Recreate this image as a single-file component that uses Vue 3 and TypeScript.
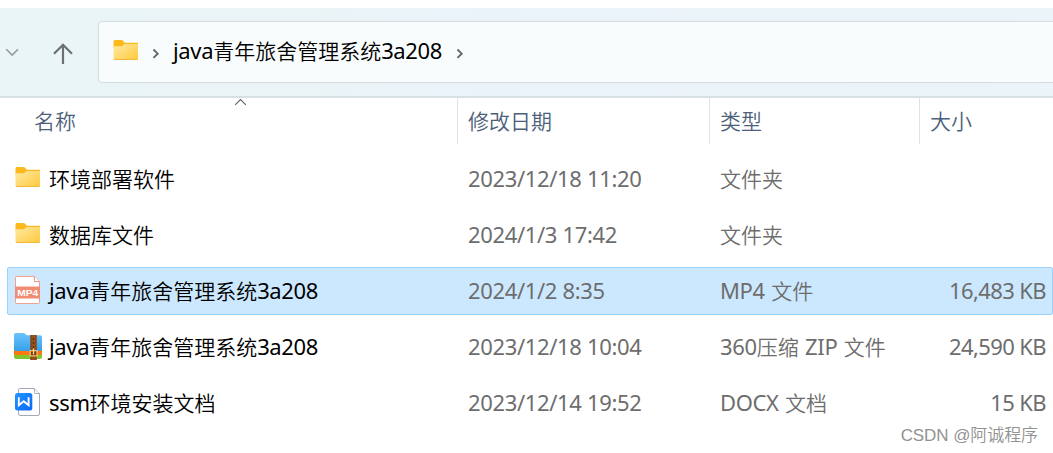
<script setup lang="ts">
import { h, type FunctionalComponent } from 'vue'

type Kind = 'folder' | 'mp4' | 'zip' | 'docx'
interface Entry {
  name: string
  date: string
  type: string
  size: string
  kind: Kind
  selected?: boolean
}

const folderName = 'java青年旅舍管理系统3a208'
const columns = ['名称', '修改日期', '类型', '大小']
const entries: Entry[] = [
  { name: '环境部署软件', date: '2023/12/18 11:20', type: '文件夹', size: '', kind: 'folder' },
  { name: '数据库文件', date: '2024/1/3 17:42', type: '文件夹', size: '', kind: 'folder' },
  { name: folderName, date: '2024/1/2 8:35', type: 'MP4 文件', size: '16,483 KB', kind: 'mp4', selected: true },
  { name: folderName, date: '2023/12/18 10:04', type: '360压缩 ZIP 文件', size: '24,590 KB', kind: 'zip' },
  { name: 'ssm环境安装文档', date: '2023/12/14 19:52', type: 'DOCX 文档', size: '15 KB', kind: 'docx' },
]

// Latin and Chinese runs are sized separately so that they sit evenly together.
const Mixed: FunctionalComponent<{ text: string }> = (props) =>
  h(
    'span',
    { class: 'mixed' },
    (props.text.match(/[\u4e00-\u9fff]+|[^\u4e00-\u9fff]+/g) ?? []).map((run) =>
      h('span', { class: /[\u4e00-\u9fff]/.test(run) ? 'han' : 'latin' }, run),
    ),
  )
Mixed.props = ['text']
</script>

<template>
  <div class="window">
    <svg class="defs" width="0" height="0" aria-hidden="true">
      <defs>
        <linearGradient id="folderFace" x1="0" y1="0" x2="1" y2="1">
          <stop offset="0" stop-color="#ffe9a6" />
          <stop offset="1" stop-color="#ffca3a" />
        </linearGradient>
        <linearGradient id="zipFace" x1="0" y1="0" x2="0" y2="1">
          <stop offset="0" stop-color="#6cc4fa" />
          <stop offset="1" stop-color="#35a0ea" />
        </linearGradient>
        <linearGradient id="docFace" x1="0" y1="0" x2="1" y2="1">
          <stop offset="0" stop-color="#2196ff" />
          <stop offset="1" stop-color="#0a68f5" />
        </linearGradient>
        <symbol id="folder" viewBox="0 0 28 28">
          <path d="M1.5 4.5Q1.5 3 3 3H9.5Q10.5 3 11.3 4L12.7 5.7H25Q26 5.7 26 6.7V11H1.5Z" fill="#fbb91c" />
          <path d="M1.5 9.2H9.3Q10.5 9.2 11.3 8.3L12.3 7H26V21.5Q26 23 24.5 23H3Q1.5 23 1.5 21.5Z" fill="url(#folderFace)" />
          <path d="M2 22.5H25.5" stroke="#efb73b" stroke-width="1" />
        </symbol>
      </defs>
    </svg>

    <header class="toolbar">
      <svg class="recent" width="14" height="10" viewBox="0 0 14 10">
        <path d="M1.3 2.2L7.2 8L13 2.2" fill="none" stroke="#969c9e" stroke-width="1.6" />
      </svg>
      <svg class="up" width="22" height="24" viewBox="0 0 22 24">
        <path d="M11 23V3.5M2 12.7L11 3.7L20 12.7" fill="none" stroke="#6d7072" stroke-width="2.2" />
      </svg>
      <div class="address">
        <svg class="folder-small" width="28" height="28"><use href="#folder" /></svg>
        <svg class="crumb" width="8" height="12" viewBox="0 0 8 12">
          <path d="M1.5 1.5L5.7 5.7L1.5 9.9" fill="none" stroke="#63676a" stroke-width="1.9" />
        </svg>
        <Mixed class="path" :text="folderName" />
        <svg class="crumb" width="8" height="12" viewBox="0 0 8 12">
          <path d="M1.5 1.5L5.7 5.7L1.5 9.9" fill="none" stroke="#63676a" stroke-width="1.9" />
        </svg>
      </div>
    </header>

    <div class="heads">
      <div v-for="c in columns" :key="c" class="head"><Mixed :text="c" /></div>
      <svg class="sort" width="12" height="8" viewBox="0 0 12 8">
        <path d="M1.2 6.9L6.5 1.6L11.8 6.9" fill="none" stroke="#606060" stroke-width="1.1" />
      </svg>
    </div>

    <main class="list">
      <div v-for="(e, i) in entries" :key="i" class="row" :class="{ selected: e.selected }">
        <div class="name">
          <svg class="icon" width="28" height="28" viewBox="0 0 28 28">
            <use v-if="e.kind === 'folder'" href="#folder" />
            <g v-else-if="e.kind === 'mp4'">
              <path d="M2.5.5H20.5L25.5 5.5V26.5Q25.5 27.5 24.5 27.5H2.5Q1.5 27.5 1.5 26.5V1.5Q1.5.5 2.5.5Z" fill="#fff" stroke="#f1a18f" />
              <path d="M20.5.5V5.5H25.5" fill="#fff" stroke="#f1927c" />
              <path d="M1 10.5H26V22.5H1Z" fill="#f08c74" />
              <text x="13.7" y="20.2" text-anchor="middle" textLength="21" lengthAdjust="spacingAndGlyphs" class="mp4-label">MP4</text>
            </g>
            <g v-else-if="e.kind === 'zip'">
              <path d="M0 18H28V25Q28 27 26 27H2Q0 27 0 25Z" fill="#82c62b" />
              <path d="M0 16H28V22Q28 23 26 23H2Q0 23 0 22Z" fill="#ff7910" />
              <path d="M0 2.8Q0 1 1.8 1H9.5Q10.6 1 11.4 2L12.8 3.2H26Q28 3.2 28 5.2V17.5Q28 19 26 19H2Q0 19 0 17.5Z" fill="url(#zipFace)" />
              <path d="M16.5 3H22.5V28H16.5Z" fill="#9a501b" />
              <path d="M17 3V28M22 3V28" stroke="#774018" />
              <path d="M19.5 6V8M19.5 10V12M19.5 14V16" stroke="#5d2d10" stroke-width="1.3" />
              <rect x="16.2" y="18.7" width="6.8" height="5.2" fill="#7d3c12" stroke="#f0c879" stroke-width="1.2" />
              <path d="M19.5 16.5V22.5" stroke="#ffe09a" stroke-width="1.2" />
            </g>
            <g v-else>
              <path d="M5.5.5H20.5L25.5 5.5V26Q25.5 27.5 24 27.5H6Q4.5 27.5 4.5 26V2Q4.5.5 5.5.5Z" fill="#fff" stroke="#a4aab8" />
              <path d="M20.5.5V4.5Q20.5 5.5 21.5 5.5H25.5" fill="#f4f5f8" stroke="#a4aab8" />
              <rect x="1" y="5" width="17.3" height="17.5" rx="2.5" fill="url(#docFace)" />
              <path d="M4.8 9.2V17.3L9.7 13.2L14.6 17.3V9.2" fill="none" stroke="#fff" stroke-width="1.9" />
            </g>
          </svg>
          <Mixed :text="e.name" />
        </div>
        <div class="date"><Mixed :text="e.date" /></div>
        <div class="type"><Mixed :text="e.type" /></div>
        <div class="size"><Mixed :text="e.size" /></div>
      </div>
    </main>
    <div class="watermark">CSDN @阿诚程序</div>
  </div>
</template>

<style>
body {
  margin: 0;
  background: #fff;
}
.mixed {
  display: block;
  white-space: pre;
  line-height: 30px;
  height: 30px;
}
.mixed .han {
  font: 350 21px/30px 'Noto Sans CJK SC', sans-serif;
}
.mixed .latin {
  font: 400 22px/30px 'Noto Sans', sans-serif;
  letter-spacing: -0.35px;
}
.type .latin {
  word-spacing: 1px;
}
.size .latin {
  letter-spacing: -0.6px;
}
</style>

<style scoped>
.window {
  position: relative;
  width: 1053px;
  height: 453px;
  padding-top: 8px;
  box-sizing: border-box;
  overflow: hidden;
  background: #fff;
  font: 21px/30px 'Noto Sans', 'Noto Sans CJK SC', sans-serif;
}
.defs {
  position: absolute;
}
.toolbar {
  display: flex;
  height: 90px;
  box-sizing: border-box;
  border-bottom: 2px solid #d8e0e4;
  background: linear-gradient(90deg, #eaf5f7 0, #eaf4f7 340px, #ebf3fa 480px, #ebf4f8 100%);
}
.recent {
  margin: 39px 0 0 5px;
}
.up {
  margin: 33px 0 0 33px;
}
.address {
  display: flex;
  align-items: center;
  flex: 1;
  height: 62px;
  box-sizing: border-box;
  margin: 13px -4px 0 24px;
  border: 1px solid #d4dadd;
  border-radius: 4px;
  background: #f9fcfd;
  color: #000;
}
.folder-small {
  margin: -2px 12px 0 13px;
}
.crumb {
  margin-top: 4px;
}
.path {
  margin: -4px 14px 0 13px;
}
.heads {
  position: relative;
  display: grid;
  grid-template-columns: 458px 252px 210px 1fr;
  height: 46px;
  color: #4c607a;
}
.head {
  box-sizing: border-box;
  padding: 7px 0 0 10px;
  border-right: 1px solid #e2e2e2;
}
.head:first-child {
  padding-left: 34px;
}
.head:nth-child(4) {
  border: 0;
}
.sort {
  position: absolute;
  left: 234px;
  top: 0;
}
.list {
  display: grid;
  gap: 8px;
  padding: 11px 0 0 7px;
}
.row {
  display: grid;
  grid-template-columns: 460px 252px 180px 1fr;
  align-items: center;
  height: 48px;
  box-sizing: border-box;
  border: 1px solid transparent;
  border-radius: 2px;
  color: #6d6d6d;
}
.row.selected {
  border-color: #99d1ff;
  background: #cce8ff;
}
.row .mixed {
  margin-top: -2px;
}
.name {
  display: flex;
  align-items: center;
  gap: 7px;
  padding-left: 6px;
  color: #000;
}
.icon {
  margin-top: -2px;
}
.size {
  padding-right: 6px;
  text-align: right;
}
.mp4-label {
  font: 700 9.5px 'Liberation Sans', sans-serif;
  fill: #fff;
}
.watermark {
  position: absolute;
  right: 15px;
  top: 424px;
  font: 350 17px/24px 'Liberation Sans', 'Noto Sans CJK SC', sans-serif;
  letter-spacing: -0.08px;
  color: #929292;
  white-space: nowrap;
}
</style>
